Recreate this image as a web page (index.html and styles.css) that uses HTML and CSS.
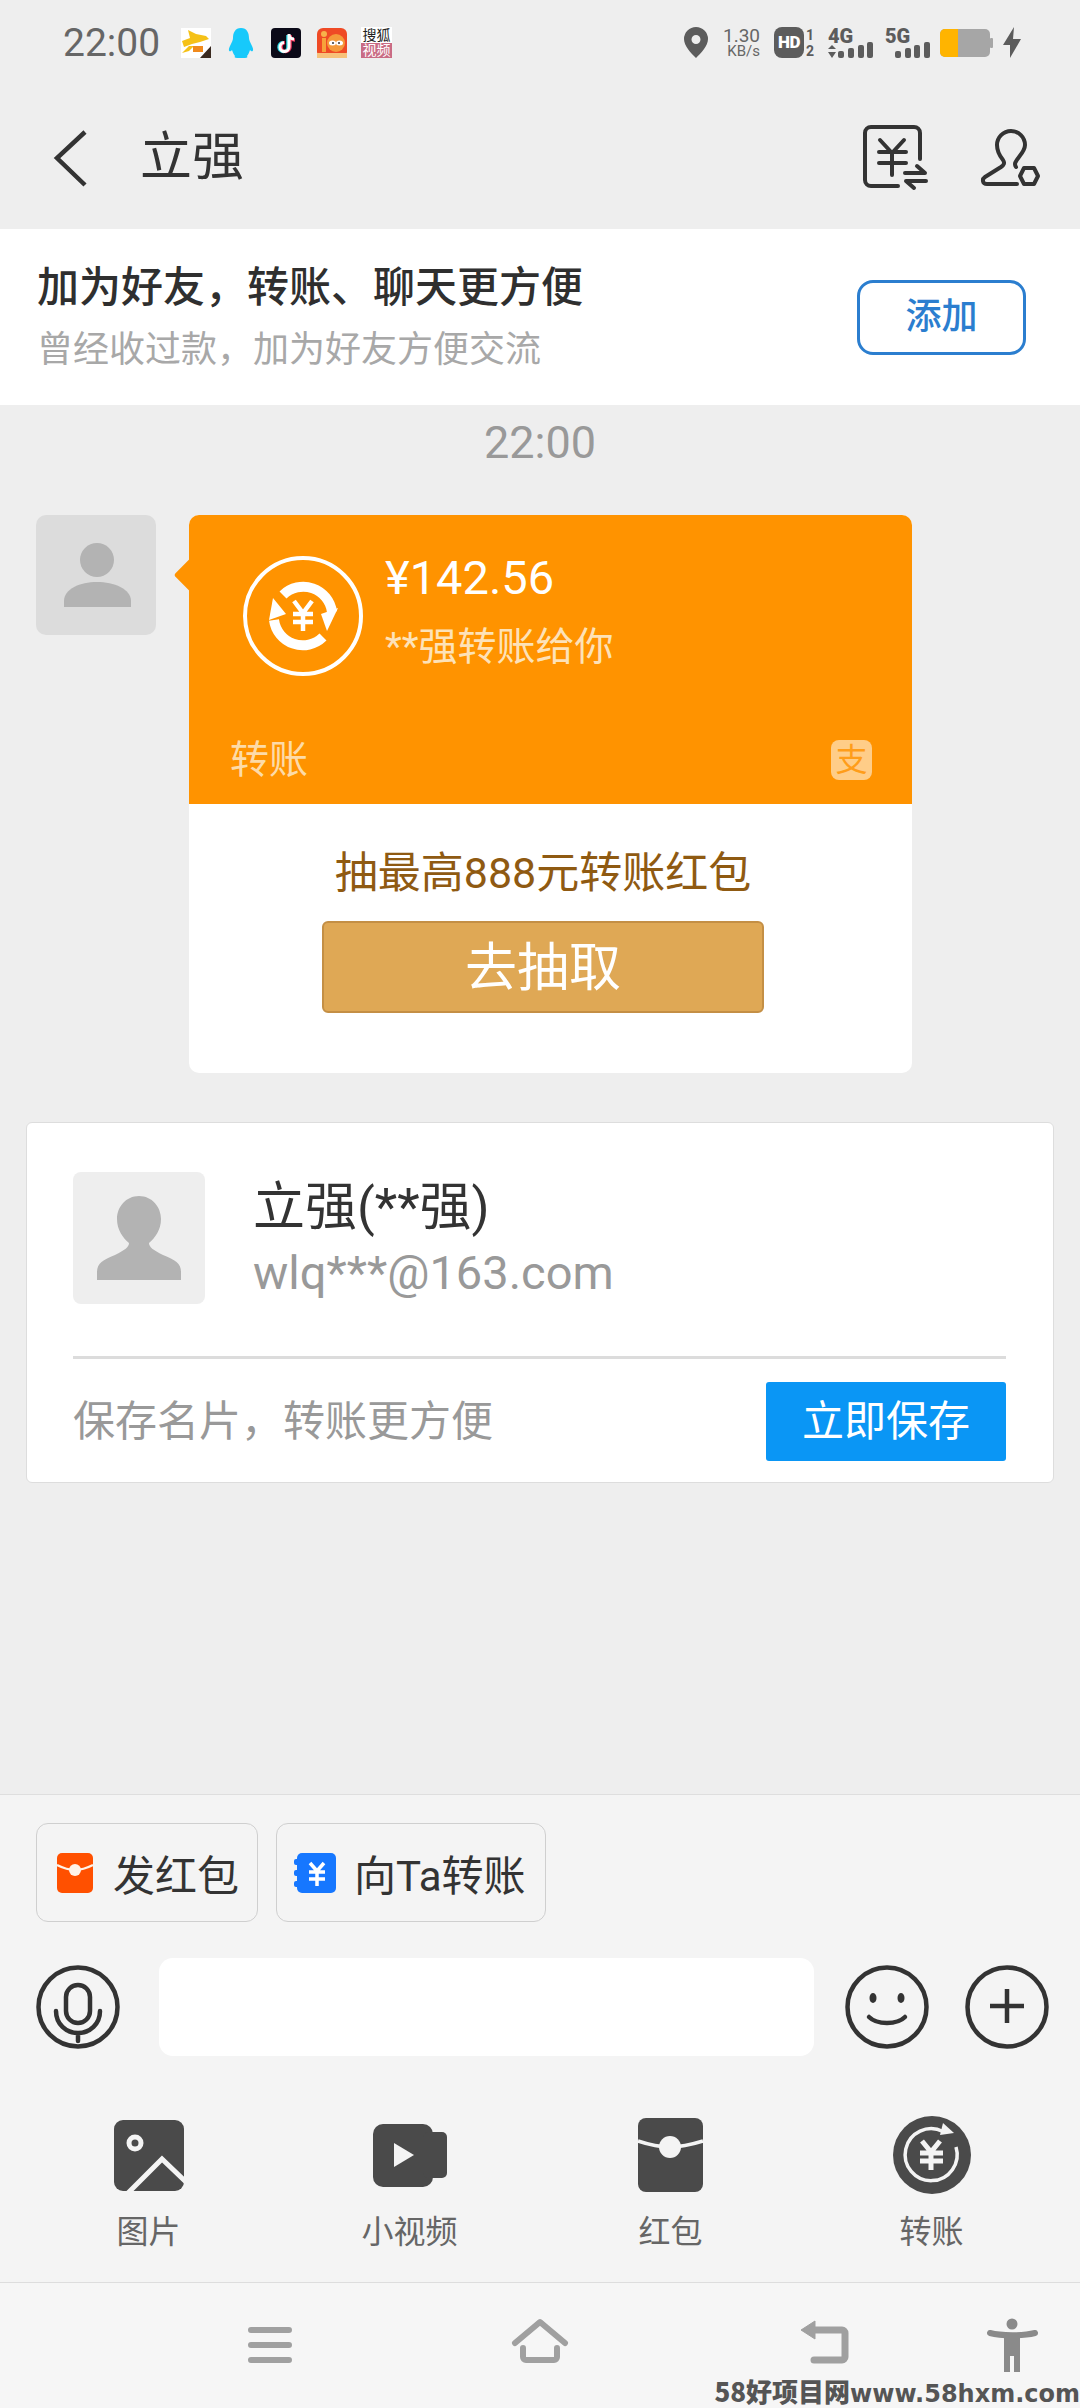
FILE: index.html
```html
<!DOCTYPE html>
<html lang="zh">
<head>
<meta charset="utf-8">
<title>立强</title>
<link rel="stylesheet" href="styles.css">
</head>
<body>
<div class="page">
  <div class="status">
    <div class="status-left">
      <span class="clock">22:00</span>
      <svg class="app app-fox" width="30" height="30" viewBox="0 0 30 30"><rect width="30" height="30" fill="#fff"/><path d="M1 13 L9 10 L7 2 L15 6 L25 8 L28 11 L19 14 L11 16 L3 19 Z" fill="#f5c117"/><path d="M1 25 L8 18 L13 18 L8 23 Z" fill="#f5c117"/><rect x="12" y="18" width="10" height="6" fill="#f08a1d"/><path d="M30 18 V30 H19 Z" fill="#3a2a20"/></svg>
      <svg class="app app-qq" width="26" height="30" viewBox="0 0 26 30"><path d="M13 0 C7 0 5 5 5 10 C5 12 4 14 2 18 C0 22 1 24 3 23 L4 22 C5 25 6 27 7 28 C6 29 7 30 9 30 H17 C19 30 20 29 19 28 C20 27 21 25 22 22 L23 23 C25 24 26 22 24 18 C22 14 21 12 21 10 C21 5 19 0 13 0 Z" fill="#17c9fb"/></svg>
      <svg class="app app-tt" width="30" height="30" viewBox="0 0 30 30"><rect width="30" height="30" rx="4" fill="#0b0a18"/><path d="M17 7 V19 A4.5 4.5 0 1 1 12 14.5" fill="none" stroke="#2bd9e6" stroke-width="3.5"/><path d="M19 7 V19 A4.5 4.5 0 1 1 14 14.5 M19 7 C19 10 21 12 24 12" fill="none" stroke="#f0365c" stroke-width="3.5"/><path d="M18 6 V19 A4.5 4.5 0 1 1 13 14.5 M18 6 C18 9 20 11 23 11" fill="none" stroke="#fff" stroke-width="3"/></svg>
      <svg class="app app-mi" width="30" height="30" viewBox="0 0 30 30"><rect width="30" height="30" rx="6" fill="#ef4a25"/><rect y="25" width="30" height="5" fill="#f7c27a"/><circle cx="7" cy="6" r="3" fill="#f7b24a"/><rect x="5" y="10" width="4" height="14" fill="#f7a23a"/><circle cx="19" cy="15" r="9" fill="#f59a3a"/><ellipse cx="15.500" cy="15" rx="3.500" ry="2.500" fill="#fff"/><ellipse cx="22.500" cy="15" rx="3.500" ry="2.500" fill="#fff"/><circle cx="16" cy="15" r="1" fill="#333"/><circle cx="22" cy="15" r="1" fill="#333"/></svg>
      <div class="app app-sohu"><span class="sohu-top">搜狐</span><span class="sohu-bot">视频</span></div>
    </div>
    <div class="status-right">
      <svg class="st-pin" width="24" height="31" viewBox="0 0 24 31"><path fill-rule="evenodd" d="M12 0 A12 12 0 0 1 24 12 C24 19 17 26 12 31 C7 26 0 19 0 12 A12 12 0 0 1 12 0 Z M12 8 A4.500 4.500 0 1 0 12 17 A4.500 4.500 0 1 0 12 8 Z" fill="#5c5c5c"/></svg>
      <div class="st-speed"><span class="st-num">1.30</span><span class="st-unit">KB/s</span></div>
      <div class="st-hd"><span class="hd-box">HD</span><span class="hd-nums"><span>1</span><span>2</span></span></div>
      <svg class="st-4g" width="46" height="31" viewBox="0 0 46 31"><text class="net-text" x="1" y="16">4G</text><path d="M5 18 L9 22 H1 Z M5 31 L9 25 H1 Z" fill="#5c5c5c"/><rect x="11" y="24" width="6" height="7" rx="2" fill="#5c5c5c"/><rect x="21" y="21" width="6" height="10" rx="2" fill="#5c5c5c"/><rect x="31" y="18" width="6" height="13" rx="2" fill="#5c5c5c"/><rect x="40" y="15" width="6" height="16" rx="2" fill="#5c5c5c"/></svg>
      <svg class="st-5g" width="45" height="31" viewBox="0 0 45 31"><text class="net-text" x="0" y="16">5G</text><rect x="10" y="24" width="6" height="7" rx="2" fill="#5c5c5c"/><rect x="20" y="21" width="6" height="10" rx="2" fill="#5c5c5c"/><rect x="29" y="18" width="6" height="13" rx="2" fill="#5c5c5c"/><rect x="39" y="15" width="6" height="16" rx="2" fill="#5c5c5c"/></svg>
      <svg class="st-bat" width="53" height="28" viewBox="0 0 53 28"><rect x="0" y="0" width="50" height="28" rx="5" fill="#a6a6a6"/><rect x="50" y="9" width="3" height="10" rx="1" fill="#a6a6a6"/><path d="M18 0 H5 A5 5 0 0 0 0 5 V23 A5 5 0 0 0 5 28 H18 Z" fill="#ffb400"/></svg>
      <svg class="st-bolt" width="18" height="31" viewBox="0 0 18 31"><path d="M11 0 L0 18 H7 L7 31 L18 12 H10 Z" fill="#5c5c5c"/></svg>
    </div>
  </div>

  <div class="header">
    <svg class="back" width="36" height="58" viewBox="0 0 36 58"><path d="M32 3 L4 29 L32 56" fill="none" stroke="#333" stroke-width="4.500"/></svg>
    <span class="title">立强</span>
    <svg class="hd-ic1" width="64" height="66" viewBox="0 0 64 66"><g fill="none" stroke="#333" stroke-width="4" stroke-linecap="round" stroke-linejoin="round"><path d="M57 34 V8 A6 6 0 0 0 51 2 H8 A6 6 0 0 0 2 8 V55 A6 6 0 0 0 8 61 H35"/><path d="M17 15 L29 28 L41 15 M16 27 H43 M16 38 H43 M29 28 V50"/><path d="M42 48 H62 L54 41 M63 56 H43 L51 63"/></g></svg>
    <svg class="hd-ic2" width="58" height="56" viewBox="0 0 58 56"><g fill="none" stroke="#333" stroke-width="4" stroke-linecap="round" stroke-linejoin="round"><path d="M35 37 C33 34 34 32 38 27 C42 22 44 19 44 15 A14 14 0 0 0 16 15 C16 20 18 25 22 30 C24 33 23 35 20 37 L4 47 C1 49 1 54 6 54 H36"/><path d="M43 38 H53 L57 46 L53 54 H43 L39 46 Z"/></g></svg>
  </div>

  <div class="banner">
    <div class="banner-text">
      <div class="banner-title">加为好友，转账、聊天更方便</div>
      <div class="banner-sub">曾经收过款，加为好友方便交流</div>
    </div>
    <div class="add-btn">添加</div>
  </div>

  <div class="chat-time">22:00</div>

  <div class="msg-row">
    <div class="avatar">
      <svg width="120" height="120" viewBox="0 0 120 120"><circle cx="61" cy="45" r="17" fill="#b3b3b3"/><path d="M28 92 V86 C28 74 44 67 61 67 C78 67 95 74 95 86 V92 Z" fill="#b3b3b3"/></svg>
    </div>
    <div class="bubble">
      <div class="bubble-top">
        <div class="bubble-main">
          <svg class="tr-ic" width="120" height="120" viewBox="0 0 120 120"><circle cx="60" cy="60" r="58" fill="none" stroke="#fff" stroke-width="4"/><path d="M40 39 A29 29 0 0 1 89 56" fill="none" stroke="#fff" stroke-width="10"/><path d="M78 58 L95 52 L84 75 Z" fill="#fff"/><path d="M80 81 A29 29 0 0 1 31 64" fill="none" stroke="#fff" stroke-width="10"/><path d="M26 64 L43 58 L30 42 Z" fill="#fff"/><path d="M51 45 L60 57 L69 45 M50 58 H70 M50 66 H70 M60 57 V75" fill="none" stroke="#fff" stroke-width="4.500"/></svg>
          <div class="bubble-text">
            <div class="amount">¥142.56</div>
            <div class="from">**强转账给你</div>
          </div>
        </div>
        <div class="bubble-foot">
          <span class="bubble-label">转账</span>
          <span class="ali-box">支</span>
        </div>
      </div>
      <div class="bubble-bottom">
        <div class="promo">抽最高888元转账红包</div>
        <div class="draw-btn">去抽取</div>
      </div>
    </div>
  </div>

  <div class="contact">
    <div class="contact-top">
      <div class="contact-av">
        <svg width="132" height="132" viewBox="0 0 132 132"><path d="M66 24 C79 24 88 35 88 47 C88 58 82 66 76 71 C76 75 80 78 90 83 C102 88 108 91 108 100 V108 H24 V100 C24 91 30 88 42 83 C52 78 56 75 56 71 C50 66 44 58 44 47 C44 35 53 24 66 24 Z" fill="#b3b3b3"/></svg>
      </div>
      <div class="contact-info">
        <div class="contact-name">立强(**强)</div>
        <div class="contact-mail">wlq***@163.com</div>
      </div>
    </div>
    <div class="contact-line"></div>
    <div class="contact-foot">
      <span class="contact-tip">保存名片，转账更方便</span>
      <span class="save-btn">立即保存</span>
    </div>
  </div>

  <div class="panel">
    <div class="chips">
      <div class="chip chip-red">
        <svg width="36" height="40" viewBox="0 0 36 40"><rect width="36" height="40" rx="5" fill="#ff5000"/><path d="M0 12 C8 16 12 17 18 17 C24 17 28 16 36 12" fill="none" stroke="#fff3e8" stroke-width="2.500"/><circle cx="18" cy="17" r="6" fill="#fff3e8"/></svg>
        <span>发红包</span>
      </div>
      <div class="chip chip-blue">
        <svg width="42" height="40" viewBox="0 0 42 40"><rect x="3" width="39" height="40" rx="5" fill="#1677ff"/><rect x="0" y="6" width="6" height="6" rx="2" fill="#1677ff"/><rect x="0" y="17" width="6" height="6" rx="2" fill="#1677ff"/><rect x="0" y="28" width="6" height="6" rx="2" fill="#1677ff"/><path d="M16 10 L23 18 L30 10 M15 19 H31 M15 26 H31 M23 18 V33" fill="none" stroke="#fff" stroke-width="3.500"/></svg>
        <span>向Ta转账</span>
      </div>
    </div>
    <div class="input-row">
      <svg class="ir-ic" width="84" height="84" viewBox="0 0 84 84"><g fill="none" stroke="#333" stroke-width="4.500" stroke-linecap="round"><circle cx="42" cy="42" r="39.500"/><rect x="30" y="20" width="24" height="38" rx="12"/><path d="M20 46 C20 59 30 68 42 68 C54 68 64 59 64 46 M42 68 V76"/></g></svg>
      <div class="input"></div>
      <svg class="ir-ic ir-smile" width="84" height="84" viewBox="0 0 84 84"><circle cx="42" cy="42" r="39.500" fill="none" stroke="#333" stroke-width="4.500"/><ellipse cx="28" cy="33" rx="3.500" ry="5" fill="#333"/><ellipse cx="56" cy="33" rx="3.500" ry="5" fill="#333"/><path d="M24 52 C32 60 52 60 60 52" fill="none" stroke="#333" stroke-width="4.500" stroke-linecap="round"/></svg>
      <svg class="ir-ic ir-plus" width="84" height="84" viewBox="0 0 84 84"><circle cx="42" cy="42" r="39.500" fill="none" stroke="#333" stroke-width="4.500"/><path d="M25 41 H59 M42 24 V58" fill="none" stroke="#333" stroke-width="4.500"/></svg>
    </div>
    <div class="tools">
      <div class="tool">
        <div class="tool-ic"><svg width="70" height="71" viewBox="0 0 70 71"><rect width="70" height="71" rx="9" fill="#4a4a4a"/><circle cx="21" cy="23" r="6" fill="none" stroke="#f4f4f4" stroke-width="5"/><path d="M14 73 L48 39 L72 62" fill="none" stroke="#f4f4f4" stroke-width="5"/></svg></div>
        <span class="tool-label">图片</span>
      </div>
      <div class="tool">
        <div class="tool-ic"><svg width="74" height="63" viewBox="0 0 74 63"><rect width="60" height="63" rx="10" fill="#4a4a4a"/><rect x="50" y="8" width="24" height="46" rx="5" fill="#4a4a4a"/><path d="M21 19 L41 31 L21 43 Z" fill="#f4f4f4"/></svg></div>
        <span class="tool-label">小视频</span>
      </div>
      <div class="tool">
        <div class="tool-ic"><svg width="65" height="74" viewBox="0 0 65 74"><rect width="65" height="74" rx="8" fill="#4a4a4a"/><path d="M0 23 C12 27 22 29 32 29 C42 29 52 27 65 23" fill="none" stroke="#f4f4f4" stroke-width="3.500"/><circle cx="32" cy="29" r="11" fill="#f4f4f4"/></svg></div>
        <span class="tool-label">红包</span>
      </div>
      <div class="tool">
        <div class="tool-ic"><svg width="78" height="78" viewBox="0 0 78 78"><circle cx="39" cy="39" r="39" fill="#4a4a4a"/><path d="M63 31 A26 26 0 1 1 50 15.500" fill="none" stroke="#f4f4f4" stroke-width="3.500"/><path d="M50 7 L61 17 L47 19 Z" fill="#f4f4f4"/><path d="M29 25 L38 36 L47 25 M27 37 H50 M27 45 H50 M38 36 V54" fill="none" stroke="#f4f4f4" stroke-width="5"/></svg></div>
        <span class="tool-label">转账</span>
      </div>
    </div>
  </div>

  <div class="nav">
    <svg class="nav-menu" width="44" height="60" viewBox="0 0 44 60"><path d="M3 15 H41 M3 30 H41 M3 45 H41" fill="none" stroke="#a0a0a0" stroke-width="6" stroke-linecap="round"/></svg>
    <svg class="nav-home" width="56" height="60" viewBox="0 0 56 60"><path d="M3 28 L28 7 L53 28" fill="none" stroke="#a0a0a0" stroke-width="6" stroke-linecap="round" stroke-linejoin="round"/><path d="M11 33 V42 A3 3 0 0 0 14 45 H42 A3 3 0 0 0 45 42 V33" fill="none" stroke="#a0a0a0" stroke-width="6" stroke-linecap="round"/></svg>
    <svg class="nav-back" width="48" height="60" viewBox="0 0 48 60"><path d="M0 15 L14 6 V24 Z" fill="#a0a0a0" stroke="#a0a0a0" stroke-width="1" stroke-linejoin="round"/><path d="M12 15 H41 A3 3 0 0 1 44 18 V42 A3 3 0 0 1 41 45 H13" fill="none" stroke="#a0a0a0" stroke-width="7" stroke-linecap="round"/></svg>
    <svg class="nav-a11y" width="47" height="60" viewBox="0 0 47 60"><circle cx="23" cy="9" r="5.500" fill="#8a8a8a"/><path d="M1 18 C12 21 34 21 46 18" fill="none" stroke="#8a8a8a" stroke-width="6" stroke-linecap="round"/><path d="M15 20 H31 V57 H25 V41 H21 V57 H15 Z" fill="#8a8a8a"/></svg>
  </div>

  <div class="watermark"><span class="wm-cn">58好项目网</span><span class="wm-en">www.58hxm.com</span></div>
</div>
</body>
</html>
```

FILE: styles.css
```css
* { box-sizing: border-box; }
html, body { margin: 0; padding: 0; }
body { font-family: Roboto, "Noto Sans CJK SC", sans-serif; }
svg { display: block; flex: none; overflow: visible; }
.page {
  position: relative;
  width: 1080px;
  height: 2408px;
  background: #eeeeee;
  display: flex;
  flex-direction: column;
  overflow: hidden;
}

/* status bar */
.status {
  height: 78px;
  padding: 7px 59px 0 63px;
  display: flex;
  justify-content: space-between;
  align-items: center;
}
.status-left, .status-right { display: flex; align-items: center; }
.clock { font-size: 39px; color: #666; width: 96px; line-height: 46px; }
.app-fox { margin-left: 22px; }
.app-qq { margin-left: 17px; }
.app-tt { margin-left: 17px; }
.app-mi { margin-left: 16px; }
.app-sohu {
  margin-left: 14px;
  width: 31px;
  height: 31px;
  background: #fff;
  display: flex;
  flex-direction: column;
  align-items: center;
  font-size: 14px;
  line-height: 16px;
}
.sohu-top { color: #222; white-space: nowrap; }
.sohu-bot { color: #fff; background: #c96b84; white-space: nowrap; width: 100%; text-align: center; line-height: 15px; font-size: 14px; }
.st-speed {
  margin-left: 16px;
  width: 36px;
  display: flex;
  flex-direction: column;
  align-items: flex-end;
  color: #666;
}
.st-num { font-size: 19px; line-height: 17px; }
.st-unit { font-size: 15px; line-height: 15px; }
.st-hd { margin-left: 14px; display: flex; align-items: center; width: 42px; }
.hd-box {
  width: 30px;
  height: 31px;
  border-radius: 8px;
  background: #5c5c5c;
  color: #fff;
  font-size: 17px;
  font-weight: 900;
  line-height: 31px;
  text-align: center;
  letter-spacing: -0.5px;
}
.hd-nums {
  width: 12px;
  display: flex;
  flex-direction: column;
  align-items: center;
  color: #5c5c5c;
  font-size: 14px;
  font-weight: 700;
  line-height: 16px;
}
.st-4g { margin-left: 11px; }
.st-5g { margin-left: 12px; }
.st-bat { margin-left: 10px; }
.st-bolt { margin-left: 10px; }
.net-text { font-family: Roboto, sans-serif; font-size: 20px; font-weight: 900; fill: #5c5c5c; }

/* header */
.header {
  height: 151px;
  padding: 8px 41px 0 53px;
  display: flex;
  align-items: center;
}
.title { margin-left: 51px; font-size: 52px; line-height: 62px; color: #333; }
.hd-ic1 { margin-left: auto; }
.hd-ic2 { margin-left: 54px; }

/* banner */
.banner {
  height: 176px;
  background: #fff;
  padding: 0 54px 0 37px;
  display: flex;
  justify-content: space-between;
  align-items: center;
}
.banner-title { font-size: 42px; font-weight: 500; line-height: 50px; color: #2f2f2f; }
.banner-sub { margin-top: 15px; font-size: 36px; line-height: 44px; color: #a8a8a8; }
.add-btn {
  width: 169px;
  height: 75px;
  border: 3px solid #2b7ecf;
  border-radius: 16px;
  color: #2b7ecf;
  font-size: 36px;
  font-weight: 500;
  line-height: 69px;
  text-align: center;
}

/* chat */
.chat-time {
  height: 76px;
  font-size: 45px;
  line-height: 76px;
  color: #999;
  text-align: center;
}
.msg-row {
  margin-top: 34px;
  padding-left: 36px;
  display: flex;
  align-items: flex-start;
}
.avatar {
  width: 120px;
  height: 120px;
  border-radius: 10px;
  background: #dcdcdc;
  overflow: hidden;
}
.bubble {
  position: relative;
  margin-left: 33px;
  width: 723px;
  height: 558px;
  border-radius: 10px;
  background: #fff;
}
.bubble::before {
  content: "";
  position: absolute;
  left: -10px;
  top: 47px;
  width: 26px;
  height: 26px;
  background: #ff9300;
  transform: rotate(45deg);
  border-radius: 3px;
}
.bubble-top {
  position: relative;
  height: 289px;
  background: #ff9300;
  border-radius: 10px 10px 0 0;
  display: flex;
  flex-direction: column;
}
.bubble-main {
  padding: 41px 0 0 54px;
  display: flex;
  align-items: flex-start;
}
.bubble-text { margin-left: 22px; margin-top: -5px; }
.amount { font-size: 47px; line-height: 54px; color: #fff; }
.from { margin-top: 19px; font-size: 39px; line-height: 46px; color: #fde2b8; }
.bubble-foot {
  margin-top: auto;
  padding: 0 40px 24px 41px;
  height: 64px;
  display: flex;
  justify-content: space-between;
  align-items: center;
}
.bubble-label { font-size: 39px; line-height: 40px; color: #fddba8; }
.ali-box {
  width: 41px;
  height: 40px;
  border-radius: 8px;
  background: #ffcd88;
  color: #ff9d1a;
  font-size: 32px;
  line-height: 40px;
  text-align: center;
}
.bubble-bottom { padding: 41px 148px 0 133px; }
.promo {
  font-size: 43px;
  line-height: 56px;
  color: #8f5a12;
  white-space: nowrap;
  display: flex;
  justify-content: center;
}
.draw-btn {
  margin-top: 20px;
  height: 92px;
  border: 2px solid #c48f45;
  border-radius: 6px;
  background: #dfa855;
  color: #fff;
  font-size: 52px;
  line-height: 92px;
  text-align: center;
}

/* contact card */
.contact {
  margin: 49px 26px 0;
  height: 361px;
  background: #fff;
  border: 1px solid #dddddd;
  border-radius: 6px;
  padding: 49px 47px 0 46px;
}
.contact-top { display: flex; align-items: flex-start; }
.contact-av { width: 132px; height: 132px; border-radius: 8px; background: #eeeeee; overflow: hidden; }
.contact-info { margin-left: 48px; padding-top: 8px; }
.contact-name { font-size: 52px; line-height: 56px; color: #333; }
.contact-mail { margin-top: 11px; font-size: 47px; line-height: 52px; color: #999; }
.contact-line { margin-top: 52px; height: 3px; background: #dcdcdc; }
.contact-foot {
  margin-top: 23px;
  display: flex;
  justify-content: space-between;
  align-items: center;
}
.contact-tip { font-size: 42px; line-height: 50px; color: #999; }
.save-btn {
  width: 240px;
  height: 79px;
  background: #0a96f5;
  border-radius: 3px;
  color: #fff;
  font-size: 42px;
  line-height: 79px;
  text-align: center;
}

/* bottom panel */
.panel {
  margin-top: auto;
  background: #f4f4f4;
  border-top: 1px solid #dedede;
  height: 488px;
  padding-top: 28px;
}
.chips { padding-left: 36px; display: flex; gap: 18px; }
.chip {
  height: 99px;
  border: 1px solid #cfcfcf;
  border-radius: 12px;
  display: flex;
  align-items: center;
  font-size: 42px;
  color: #333;
  white-space: nowrap;
}
.chip-red { width: 222px; padding-left: 20px; gap: 20px; }
.chip-blue { width: 270px; padding-left: 17px; gap: 18px; }
.input-row {
  margin-top: 36px;
  padding: 0 31px 0 36px;
  height: 98px;
  display: flex;
  align-items: center;
}
.input { margin-left: 39px; width: 656px; height: 98px; border-radius: 14px; background: #fff; }
.ir-smile { margin-left: 31px; }
.ir-plus { margin-left: 36px; }
.tools {
  margin-top: 59px;
  padding-left: 18px;
  display: flex;
}
.tool { width: 261px; display: flex; flex-direction: column; align-items: center; }
.tool-ic { height: 80px; display: flex; align-items: center; justify-content: center; }
.tool-label { margin-top: 17px; font-size: 32px; line-height: 40px; color: #666; }

/* navigation */
.nav {
  height: 126px;
  background: #f6f6f6;
  border-top: 1px solid #dddddd;
  padding: 32px 0 0 248px;
  display: flex;
  align-items: flex-start;
}
.nav-home { margin-left: 220px; }
.nav-back { margin-left: 233px; }
.nav-a11y { margin-left: 140px; }

/* watermark */
.watermark {
  position: absolute;
  right: 0;
  bottom: 0;
  color: #555;
  font-weight: 700;
  line-height: 28px;
  white-space: nowrap;
  display: flex;
  align-items: baseline;
}
.wm-cn { font-size: 26px; font-family: "Noto Sans CJK SC", sans-serif; font-weight: 900; }
.wm-en { font-size: 24px; font-family: "DejaVu Sans", sans-serif; font-weight: 700; }
```
